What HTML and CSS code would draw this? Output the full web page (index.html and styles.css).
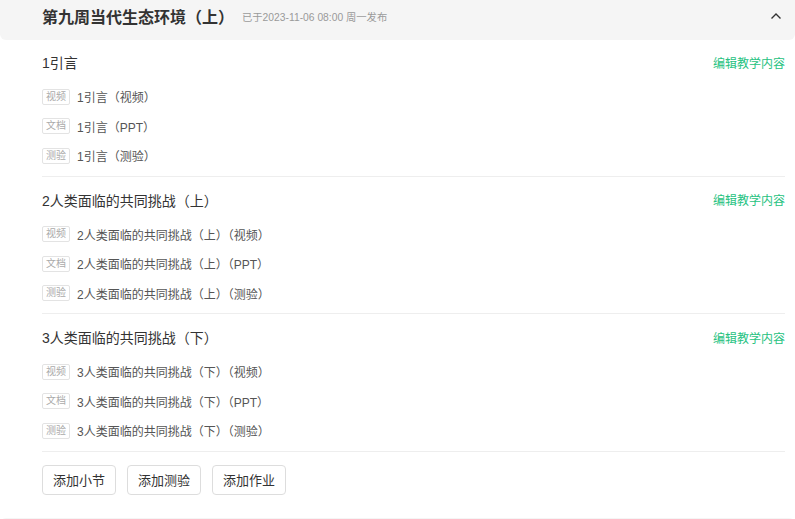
FILE: index.html
```html
<!DOCTYPE html>
<html lang="zh-CN">
<head>
  <meta charset="UTF-8">
  <meta name="viewport" content="width=device-width, initial-scale=1.0">
  <title>课程目录</title>
  <link rel="stylesheet" href="styles.css">
</head>
<body>
  <div class="chapter-list">
    <div class="chapter">
      <div class="chapter-header">
        <h2 class="chapter-title">第九周当代生态环境（上）</h2>
        <span class="publish-info">已于2023-11-06 08:00 周一发布</span>
        <svg class="toggle" width="12" height="8" viewBox="0 0 12 8">
          <path d="M1.5 6.5 L6 2 L10.5 6.5" fill="none" stroke="#333" stroke-width="1.4"/>
        </svg>
      </div>

      <div class="chapter-body">
        <div class="section">
          <div class="section-head">
            <span class="section-title">1引言</span>
            <a class="edit-link" href="#">编辑教学内容</a>
          </div>
          <ul class="items">
            <li><span class="tag">视频</span>1引言（视频）</li>
            <li><span class="tag">文档</span>1引言（PPT）</li>
            <li><span class="tag">测验</span>1引言（测验）</li>
          </ul>
        </div>

        <div class="section">
          <div class="section-head">
            <span class="section-title">2人类面临的共同挑战（上）</span>
            <a class="edit-link" href="#">编辑教学内容</a>
          </div>
          <ul class="items">
            <li><span class="tag">视频</span>2人类面临的共同挑战（上）（视频）</li>
            <li><span class="tag">文档</span>2人类面临的共同挑战（上）（PPT）</li>
            <li><span class="tag">测验</span>2人类面临的共同挑战（上）（测验）</li>
          </ul>
        </div>

        <div class="section">
          <div class="section-head">
            <span class="section-title">3人类面临的共同挑战（下）</span>
            <a class="edit-link" href="#">编辑教学内容</a>
          </div>
          <ul class="items">
            <li><span class="tag">视频</span>3人类面临的共同挑战（下）（视频）</li>
            <li><span class="tag">文档</span>3人类面临的共同挑战（下）（PPT）</li>
            <li><span class="tag">测验</span>3人类面临的共同挑战（下）（测验）</li>
          </ul>
        </div>

        <div class="actions">
          <button class="btn">添加小节</button>
          <button class="btn">添加测验</button>
          <button class="btn">添加作业</button>
        </div>
      </div>
    </div>

    <div class="chapter">
      <div class="chapter-header"></div>
    </div>
  </div>
</body>
</html>
```

FILE: styles.css
```css
* {
  margin: 0;
  padding: 0;
  box-sizing: border-box;
}

body {
  font-family: "Liberation Sans", "Noto Sans CJK SC", sans-serif;
  background: #ffffff;
  color: #333333;
  overflow: hidden;
}

/* list is scrolled a bit, so the first header is cut off at the top */
.chapter-list {
  margin-top: -16px;
  width: 795px;
}

.chapter-header {
  display: flex;
  align-items: center;
  height: 56px;
  padding: 8px 13px 0 42px;
  background: #f5f5f5;
  border-radius: 6px;
}

.chapter-title {
  font-size: 16px;
  font-weight: 700;
  color: #333333;
}

.publish-info {
  margin-left: 8px;
  font-size: 10.3px;
  color: #9a9a9a;
}

.toggle {
  margin-left: auto;
  margin-top: -1px;
}

.chapter-body {
  padding: 0 10px 23px 42px;
}

.section {
  padding: 12px 0 5px;
  border-bottom: 1px solid #eeeeee;
}

.section + .section {
  padding-top: 13px;
}

.section-head {
  display: flex;
  align-items: center;
  justify-content: space-between;
  height: 20px;
  margin-bottom: 10px;
}

.section-title {
  font-size: 14px;
  color: #333333;
}

.edit-link {
  font-size: 12px;
  color: #26c281;
  text-decoration: none;
}

.items {
  list-style: none;
}

.items li {
  display: flex;
  align-items: center;
  height: 29.5px;
  font-size: 12px;
  color: #555555;
}

.tag {
  display: inline-block;
  width: 28px;
  height: 16px;
  line-height: 14px;
  margin-right: 7px;
  border: 1px solid #e3e3e3;
  border-radius: 2px;
  font-size: 10px;
  color: #aaaaaa;
  text-align: center;
}

.actions {
  display: flex;
  gap: 11px;
  padding-top: 13px;
}

.btn {
  width: 74px;
  height: 30px;
  background: #ffffff;
  border: 1px solid #dddddd;
  border-radius: 4px;
  font-family: inherit;
  font-size: 13px;
  color: #333333;
  cursor: pointer;
}
```
